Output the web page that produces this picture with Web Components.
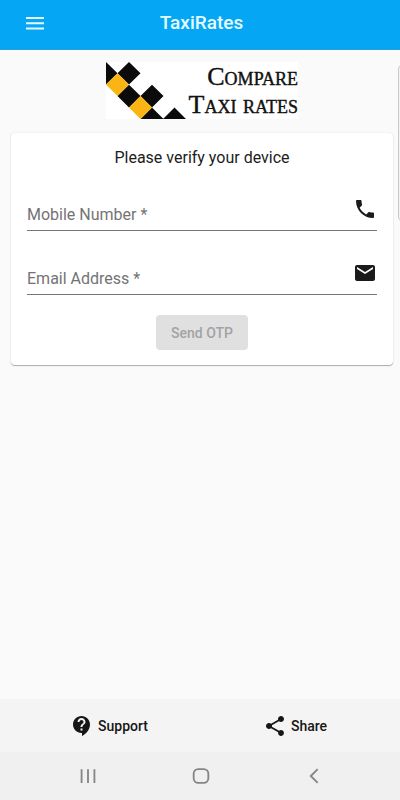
<!DOCTYPE html>
<html lang="en">
<head>
<meta charset="utf-8">
<meta name="viewport" content="width=device-width, initial-scale=1">
<title>TaxiRates</title>
<style>
  body { margin: 0; font-family: Roboto, "Liberation Sans", sans-serif; background: #fafafa; color: #1c1c1c; }
</style>
</head>
<body>
<taxi-app></taxi-app>
<script>
  const define = (name, html, setup) => {
    const template = document.createElement('template');
    template.innerHTML = html;
    customElements.define(name, class extends HTMLElement {
      connectedCallback() {
        if (this.shadowRoot) return;
        this.attachShadow({ mode: 'open' }).append(template.content.cloneNode(true));
        if (setup) setup(this, this.shadowRoot);
      }
    });
  };

  const icons = {
    phone: '<path d="M6.62 10.79c1.44 2.83 3.76 5.14 6.59 6.59l2.2-2.2c.27-.27.67-.36 1.02-.24 1.12.37 2.33.57 3.57.57.55 0 1 .45 1 1V20c0 .55-.45 1-1 1-9.39 0-17-7.61-17-17 0-.55.45-1 1-1h3.5c.55 0 1 .45 1 1 0 1.25.2 2.45.57 3.57.11.35.03.74-.25 1.02l-2.2 2.2z"/>',
    mail: '<path d="M20 4H4c-1.100 0-1.990.9-1.990 2L2 18c0 1.100.9 2 2 2h16c1.100 0 2-.9 2-2V6c0-1.100-.9-2-2-2zm0 4l-8 5-8-5V6l8 5 8-5v2z"/>',
    support: '<path d="M11.500 2C6.810 2 3 5.810 3 10.500S6.810 19 11.500 19h.5v3c4.860-2.340 8-7 8-11.500C20 5.810 16.190 2 11.500 2zm1 14.500h-2v-2h2v2zm0-3.500h-2c0-3.250 3-3 3-5 0-1.100-.9-2-2-2s-2 .9-2 2h-2c0-2.210 1.790-4 4-4s4 1.790 4 4c0 2.500-3 2.750-3 5z"/>',
    share: '<path d="M18 16.080c-.76 0-1.440.3-1.960.77L8.910 12.700c.05-.23.09-.46.09-.7s-.04-.47-.09-.7l7.050-4.110c.54.5 1.250.81 2.040.81 1.660 0 3-1.340 3-3s-1.340-3-3-3-3 1.340-3 3c0 .24.04.47.09.7L8.040 9.810C7.500 9.310 6.790 9 6 9c-1.660 0-3 1.340-3 3s1.340 3 3 3c.79 0 1.500-.31 2.040-.81l7.120 4.160c-.05.21-.08.43-.08.65 0 1.610 1.310 2.920 2.920 2.920s2.920-1.310 2.920-2.920-1.310-2.920-2.920-2.920z"/>',
    menu: '<path d="M3 18.500h18v-2H3v2zm0-5.250h18v-2H3v2zm0-7.250v2h18V6H3z"/>',
    recents: '<path d="M5 4.500v15M12 4.500v15M19 4.500v15" fill="none" stroke="currentColor" stroke-width="2"/>',
    home: '<rect x="4" y="4.500" width="16" height="15" rx="5" fill="none" stroke="currentColor" stroke-width="2"/>',
    back: '<path d="M16 4.500L8.500 12l7.500 7.500" fill="none" stroke="currentColor" stroke-width="2"/>'
  };

  define('app-icon', `
    <style>
      :host { display: inline-flex; flex: none; width: 24px; height: 24px; }
      svg { width: 100%; height: 100%; fill: currentColor; }
    </style>
    <svg viewBox="0 0 24 24" aria-hidden="true"></svg>`,
    (host, root) => { root.querySelector('svg').innerHTML = icons[host.getAttribute('name')]; });

  define('app-toolbar', `
    <style>
      :host { display: grid; grid-template-columns: 48px 1fr 48px; align-items: center; height: 50px;
              box-sizing: border-box; padding: 0 8px 3px 11px; background: #05a7f5; color: #e6fbff;
              border-bottom: 1px solid #2b9fda; }
      button { display: flex; align-items: center; justify-content: center; height: 44px; margin: 0; padding: 0;
               border: 0; background: none; color: inherit; }
      h1 { margin: 0; font-size: 19px; line-height: 24px; font-weight: 500; text-align: center; }
    </style>
    <button type="button" aria-label="Menu"><app-icon name="menu"></app-icon></button>
    <h1><slot></slot></h1>`);

  define('brand-logo', `
    <style>
      :host { display: flex; width: 192px; height: 57px; background: #fff; color: #111; }
      svg { flex: none; width: 80px; height: 57px; margin-right: -16px; }
      p { flex: 1; margin: 0; padding-top: 1px; text-align: right; white-space: nowrap; font-family: "Liberation Serif", serif;
          font-size: 26px; line-height: 28px; font-variant: small-caps; -webkit-text-stroke: 0.4px #111; }
      span { display: block; }
    </style>
    <svg viewBox="0 0 80 57" aria-hidden="true">
      <path fill="#0b0b0b" d="M0 0L11.500 11.300 0 22.600zM23 0l11.500 11.300L23 22.600 11.500 11.300zM23 22.700L34.500 34 23 45.400 11.500 34zM46 22.700L57.500 34 46 45.400 34.500 34zM46 45.400L57.500 57h-23zM68.500 45.400L80 57H57z"/>
      <path fill="#fab414" d="M11.500 11.300L23 22.600 11.500 34 0 22.600zM34.500 34L46 45.400 34.500 57 23 45.400z"/>
    </svg>
    <p><span>Compare</span><span>Taxi rates</span></p>`);

  define('text-field', `
    <style>
      :host { display: grid; grid-template-columns: 1fr 24px; height: 40px; box-sizing: border-box;
              border-bottom: 1px solid #767676; }
      label, input { grid-area: 1 / 1; align-self: end; font-size: 16px; line-height: 20px; }
      label { color: #737373; padding-bottom: 5px; pointer-events: none; }
      input { min-width: 0; margin: 0; padding: 0 0 5px; border: 0; outline: 0; background: none;
              font-family: inherit; color: #1c1c1c; }
      input:not(:placeholder-shown) + label { align-self: start; font-size: 11px; line-height: 12px; }
      app-icon { grid-area: 1 / 2; width: 24px; height: 24px; margin-top: 6px; color: #1b1b1b; }
    </style>
    <input id="field" placeholder=" " required>
    <label for="field"></label>
    <app-icon></app-icon>`,
    (host, root) => {
      root.querySelector('label').textContent = host.getAttribute('label');
      root.querySelector('input').type = host.getAttribute('type');
      const old = root.querySelector('app-icon');
      const icon = document.createElement('app-icon');
      icon.setAttribute('name', host.getAttribute('icon'));
      old.replaceWith(icon);
    });

  define('verify-card', `
    <style>
      :host { display: block; background: #fff; border-radius: 4px; padding: 14px 16px 15px;
              box-shadow: 0 1px 1px rgba(0,0,0,.3), 0 0 2px rgba(0,0,0,.1); }
      h2 { margin: 0 0 22px; font-size: 16px; line-height: 22px; font-weight: 400; text-align: center; }
      form { display: flex; flex-direction: column; gap: 24px; }
      button { align-self: center; height: 35px; margin: -4px 0 0; padding: 0 15px; border: 0; border-radius: 4px;
               background: #e0e0e0; color: #a3a3a3; font-family: inherit; font-size: 14px; line-height: 20px; font-weight: 500; }
    </style>
    <h2>Please verify your device</h2>
    <form>
      <text-field label="Mobile Number *" type="tel" icon="phone"></text-field>
      <text-field label="Email Address *" type="email" icon="mail"></text-field>
      <button type="submit" disabled>Send OTP</button>
    </form>`);

  define('action-bar', `
    <style>
      :host { display: grid; grid-template-columns: 1fr 1fr; height: 53px; padding: 0 12px 0 16px; background: #f4f4f4; }
      button { display: flex; align-items: center; justify-content: center; gap: 4px; margin: 0; padding: 0; border: 0;
               background: none; color: #161616; font-family: inherit; font-size: 14px; line-height: 20px; font-weight: 500; }
      app-icon { width: 24px; height: 24px; }
    </style>
    <button type="button"><app-icon name="support"></app-icon>Support</button>
    <button type="button"><app-icon name="share"></app-icon>Share</button>`);

  define('system-nav', `
    <style>
      :host { display: flex; justify-content: space-around; align-items: center; height: 48px; padding: 0 30px 0 32px;
              background: #f0f0f0; color: #858585; }
      button { display: flex; margin: 0; padding: 0; border: 0; background: none; color: inherit; }
      app-icon { width: 22px; height: 22px; }
    </style>
    <button type="button" aria-label="Recent apps"><app-icon name="recents"></app-icon></button>
    <button type="button" aria-label="Home"><app-icon name="home"></app-icon></button>
    <button type="button" aria-label="Back"><app-icon name="back"></app-icon></button>`);

  define('taxi-app', `
    <style>
      :host { display: flex; flex-direction: column; min-height: 100vh; }
      main { flex: 1; position: relative; display: flex; flex-direction: column; padding: 12px 7px 16px 11px; overflow: hidden; }
      brand-logo { align-self: center; margin-bottom: 14px; }
      .edge { position: absolute; top: 15px; right: -6px; width: 8px; height: 156px; box-sizing: border-box;
              border: 1px solid #c8c8c8; border-radius: 4px; background: #f4f4f4; }
    </style>
    <app-toolbar>TaxiRates</app-toolbar>
    <main>
      <brand-logo role="img" aria-label="Compare Taxi rates"></brand-logo>
      <verify-card></verify-card>
      <div class="edge"></div>
    </main>
    <action-bar></action-bar>
    <system-nav></system-nav>`);
</script>
</body>
</html>
